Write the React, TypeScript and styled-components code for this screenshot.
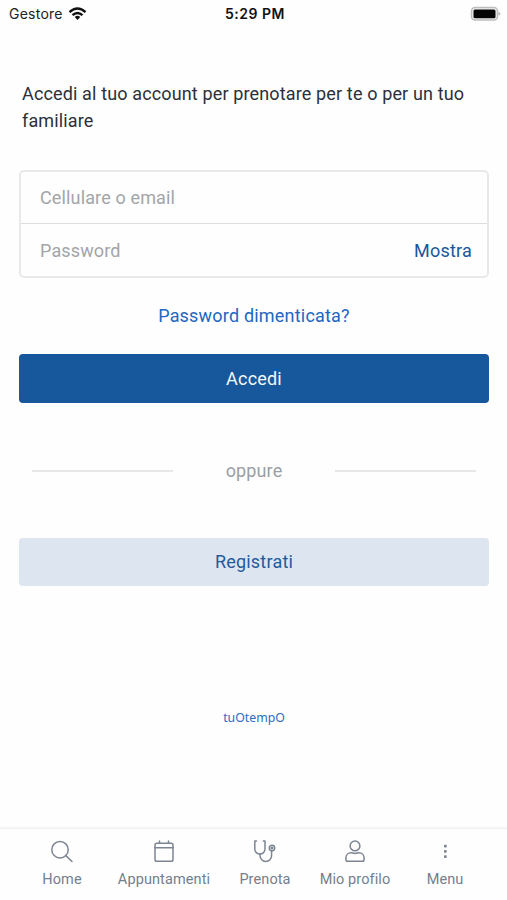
import React from "react";
import styled, { createGlobalStyle } from "styled-components";

const GlobalStyle = createGlobalStyle`
  * { box-sizing: border-box; }
  body { margin: 0; background: #fff; }
  button, input { font: inherit; letter-spacing: inherit; border: 0; background: none; padding: 0; margin: 0; }
`;

const Screen = styled.div`
  width: 507px;
  height: 900px;
  display: flex;
  flex-direction: column;
  overflow: hidden;
  background: #fefefe;
  font-family: Roboto, sans-serif;
  font-size: 18px;
  letter-spacing: 0.14px;
`;

const StatusBar = styled.header`
  height: 28px;
  flex: none;
  display: grid;
  grid-template-columns: 1fr auto 1fr;
  align-items: center;
  padding: 0 6px 1px 9px;
  font-family: Inter, sans-serif;
  font-size: 14px;
  letter-spacing: 0.25px;
  color: #222;
`;

const Carrier = styled.div`
  display: flex;
  align-items: center;
  gap: 5px;
`;

const Clock = styled.div`
  font-weight: 600;
  letter-spacing: 0.5px;
  color: #111;
`;

const Battery = styled.div`
  display: flex;
  justify-content: flex-end;
`;

const Content = styled.main`
  flex: 1;
  display: flex;
  flex-direction: column;
  padding: 52px 18px 0 19px;
`;

const Intro = styled.p`
  margin: 0 0 36px;
  padding-left: 3px;
  line-height: 27px;
  color: #2b303a;
  white-space: pre-line;
`;

const FieldGroup = styled.form`
  height: 108px;
  flex: none;
  display: grid;
  grid-template-rows: 51px 53px;
  border: 2px solid #e8e9ea;
  border-radius: 5px;
`;

const Field = styled.label`
  display: flex;
  align-items: center;
  padding: 0 15px 0 19px;
  & + & { border-top: 1px solid #dcdddf; }
`;

const Input = styled.input`
  flex: 1;
  min-width: 0;
  outline: none;
  color: #2b303a;
  &::placeholder { color: #a2a5a9; opacity: 1; }
`;

const ShowButton = styled.button`
  letter-spacing: 0.2px;
  color: #19579b;
`;

const ForgotLink = styled.a`
  align-self: center;
  margin: 24px 0 25px;
  line-height: 27px;
  letter-spacing: 0.2px;
  color: #2166c2;
`;

const Button = styled.button<{ $primary?: boolean }>`
  height: ${(p) => (p.$primary ? 49 : 48)}px;
  flex: none;
  padding-bottom: 1px;
  border-radius: 4px;
  background: ${(p) => (p.$primary ? "#17579b" : "#dde6f0")};
  color: ${(p) => (p.$primary ? "#f4f8fc" : "#245a9c")};
  letter-spacing: 0.2px;
`;

const Divider = styled.div`
  height: 135px;
  flex: none;
  display: flex;
  align-items: center;
  justify-content: space-between;
  padding: 0 13px;
  color: #9b9ea2;
`;

const Line = styled.span`
  width: 141px;
  height: 2px;
  background: #e6e7e9;
`;

const BrandLink = styled.a`
  align-self: center;
  margin-top: 122px;
  font-family: "Noto Sans", sans-serif;
  font-size: 12.3px;
  line-height: 20px;
  letter-spacing: 0;
  color: #2d6cc4;
`;

const TabBar = styled.nav`
  height: 72px;
  flex: none;
  display: grid;
  grid-template-columns: 96px 108px 94px 86px 94px;
  padding: 11px 0 0 14px;
  border-top: 1px solid #f0f0f1;
  box-shadow: 0 -1px 2px rgba(0, 0, 0, 0.04);
`;

const Tab = styled.a`
  display: flex;
  flex-direction: column;
  align-items: center;
  gap: 6px;
  font-size: 14.5px;
  line-height: 20px;
  letter-spacing: 0.1px;
  white-space: nowrap;
  color: #747e8d;
`;

const TabIcon = styled.svg`
  width: 24px;
  height: 24px;
  fill: none;
  stroke: #7d8592;
  stroke-width: 1.5;
  stroke-linecap: round;
  stroke-linejoin: round;
`;

const tabs = [
  {
    label: "Home",
    icon: <><circle cx="10" cy="9.7" r="8.2" /><path d="M15.8 15.6 22 21.5" /></>,
  },
  {
    label: "Appuntamenti",
    icon: <><rect x="3" y="3.3" width="18" height="18" rx="1.8" /><path d="M3 7.8h18M7.5 1v2.300M16.500 1v2.300" /></>,
  },
  {
    label: "Prenota",
    icon: (
      <>
        <path d="M3.500 1H1.800v8a5.100 5.100 0 0 0 10.200 0V1H10.300" />
        <path d="M7 14.100v1.500a5.800 5.800 0 0 0 11.600 0v-4.800" />
        <circle cx="19" cy="8" r="2.700" />
        <circle cx="19" cy="8" r="0.700" />
      </>
    ),
  },
  {
    label: "Mio profilo",
    icon: <><circle cx="12" cy="5.900" r="4.900" /><path d="M8.200 12.800c1.500 0 2 .6 3.800.6s2.300-.6 3.800-.6c3.200 0 5.300 2.200 5.300 5.200v1.400c0 1.100-.7 1.800-1.800 1.800H4.700c-1.100 0-1.800-.7-1.800-1.800v-1.400c0-3 2.100-5.200 5.300-5.200Z" /></>,
  },
  {
    label: "Menu",
    icon: (
      <g fill="#7d8592" stroke="none">
        <rect x="11" y="4.800" width="2.700" height="2.700" rx=".7" />
        <rect x="11" y="10" width="2.700" height="2.700" rx=".7" />
        <rect x="11" y="15.200" width="2.700" height="2.700" rx=".7" />
      </g>
    ),
  },
];

export default function App() {
  return (
    <>
      <GlobalStyle />
      <Screen>
        <StatusBar>
          <Carrier>
            Gestore
            <svg width="19" height="14" viewBox="0 0 18 14" fill="none" stroke="#111" strokeWidth="2.4">
              <path d="M1 5.200Q9-2.200 17 5.200M4 8.200Q9 3.800 14 8.200" />
              <path d="M6.200 10Q9 7.600 11.800 10L9 13Z" fill="#111" stroke="none" />
            </svg>
          </Carrier>
          <Clock>5:29 PM</Clock>
          <Battery>
            <svg width="31" height="16" viewBox="0 0 31 16">
              <rect x="1.500" y="1.500" width="26" height="12.500" rx="3.500" fill="#f0f0f0" stroke="#bdbdbd" strokeWidth="1.500" />
              <rect x="3.500" y="3.500" width="22" height="8.700" rx="1.500" fill="#050505" />
              <path d="M28.500 6v3.600q2-.4 2-1.800t-2-1.800Z" fill="#b5b5b5" />
            </svg>
          </Battery>
        </StatusBar>
        <Content>
          <Intro>{"Accedi al tuo account per prenotare per te o per un tuo\nfamiliare"}</Intro>
          <FieldGroup>
            <Field><Input placeholder="Cellulare o email" /></Field>
            <Field>
              <Input type="password" placeholder="Password" />
              <ShowButton type="button">Mostra</ShowButton>
            </Field>
          </FieldGroup>
          <ForgotLink>Password dimenticata?</ForgotLink>
          <Button $primary>Accedi</Button>
          <Divider><Line />oppure<Line /></Divider>
          <Button>Registrati</Button>
          <BrandLink>tuOtempO</BrandLink>
        </Content>
        <TabBar>
          {tabs.map((tab) => (
            <Tab key={tab.label}>
              <TabIcon viewBox="0 0 24 24">{tab.icon}</TabIcon>
              {tab.label}
            </Tab>
          ))}
        </TabBar>
      </Screen>
    </>
  );
}
